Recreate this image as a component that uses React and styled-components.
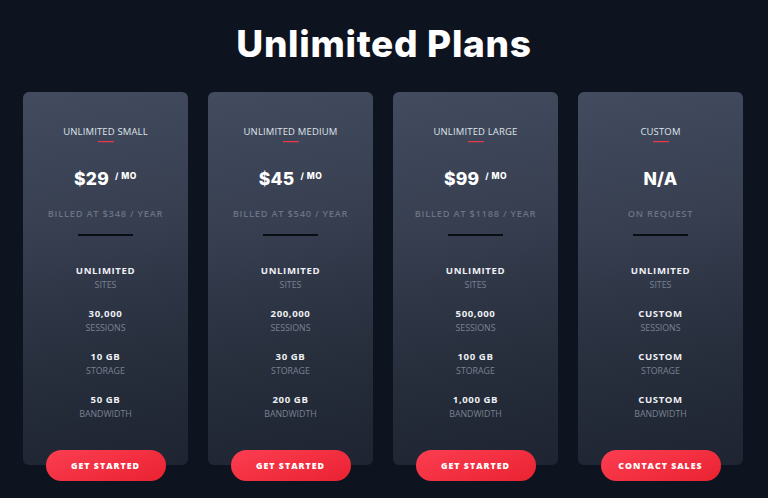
import React from "react";
import styled, { createGlobalStyle } from "styled-components";

const Global = createGlobalStyle`
  html, body { margin: 0; padding: 0; background: #0e1320; }
  body { font-family: "Open Sans", "Liberation Sans", sans-serif; -webkit-font-smoothing: antialiased; }
  * { box-sizing: border-box; }
`;

const Page = styled.div`
  width: 768px;
  height: 498px;
  background: #0e1320;
  overflow: hidden;
  display: flex;
  flex-direction: column;
  align-items: stretch;
`;

const Title = styled.h1`
  margin: 0;
  padding-top: 20px;
  height: 92px;
  text-align: center;
  font-family: "Inter", "Liberation Sans", sans-serif;
  font-weight: 800;
  font-size: 37px;
  line-height: 48px;
  letter-spacing: 0.7px;
  color: #ffffff;
`;

const Row = styled.div`
  display: flex;
  gap: 20px;
  padding-left: 23px;
`;

const Column = styled.div`
  width: 165px;
  display: flex;
  flex-direction: column;
  align-items: center;
`;

const Card = styled.div`
  width: 165px;
  height: 373px;
  border-radius: 6px;
  background: linear-gradient(170deg, #424c5e 0%, #373f51 35%, #272e3c 70%, #1e2431 100%);
  display: flex;
  flex-direction: column;
  align-items: center;
  padding-top: 34px;
`;

const PlanName = styled.div`
  font-size: 9.5px;
  line-height: 12px;
  font-weight: 400;
  color: #dfe3ea;
  letter-spacing: 0.15px;
`;

const Underline = styled.div`
  width: 16px;
  height: 1px;
  margin-top: 3px;
  background: #e8394b;
  box-shadow: 0 0.5px 0 rgba(232, 57, 75, 0.5);
`;

const PriceRow = styled.div`
  margin-top: 27px;
  display: flex;
  align-items: flex-start;
  gap: 6px;
  height: 20px;
`;

const Price = styled.span`
  font-family: "Inter", "Open Sans", sans-serif;
  font-size: 17.5px;
  line-height: 20px;
  font-weight: 800;
  color: #ffffff;
  letter-spacing: 0.2px;
`;

const Per = styled.span`
  font-family: "Inter", "Open Sans", sans-serif;
  font-size: 8.5px;
  line-height: 10px;
  font-weight: 800;
  color: #ffffff;
  margin-top: 2px;
  letter-spacing: 0.5px;
`;

const Billed = styled.div`
  margin-top: 19px;
  font-size: 9.3px;
  line-height: 12px;
  font-weight: 600;
  letter-spacing: 0.75px;
  color: #6b7384;
`;

const Divider = styled.div`
  margin-top: 14px;
  width: 55px;
  height: 1.5px;
  background: #0a0d14;
`;

const Features = styled.div`
  margin-top: 29px;
  display: flex;
  flex-direction: column;
  align-items: center;
  gap: 17px;
`;

const Feature = styled.div`
  display: flex;
  flex-direction: column;
  align-items: center;
  gap: 2px;
`;

const FeatureValue = styled.div`
  font-size: 9.6px;
  line-height: 12px;
  font-weight: 700;
  letter-spacing: 0.6px;
  color: #eef0f4;
`;

const FeatureLabel = styled.div`
  font-size: 8.8px;
  line-height: 12px;
  font-weight: 400;
  color: #7a8292;
`;

const Button = styled.button`
  margin-top: -15px;
  width: 120px;
  height: 31px;
  border: none;
  border-radius: 16px;
  background: linear-gradient(160deg, #fb3e51 0%, #ea2231 100%);
  color: #ffffff;
  font-family: "Open Sans", sans-serif;
  font-weight: 800;
  font-size: 8.8px;
  letter-spacing: 1px;
  cursor: pointer;
  padding: 0;
`;

const plans = [
  {
    name: "UNLIMITED SMALL",
    price: "$29",
    per: "/ MO",
    billed: "BILLED AT $348 / YEAR",
    features: [["UNLIMITED", "SITES"], ["30,000", "SESSIONS"], ["10 GB", "STORAGE"], ["50 GB", "BANDWIDTH"]],
    cta: "GET STARTED",
  },
  {
    name: "UNLIMITED MEDIUM",
    price: "$45",
    per: "/ MO",
    billed: "BILLED AT $540 / YEAR",
    features: [["UNLIMITED", "SITES"], ["200,000", "SESSIONS"], ["30 GB", "STORAGE"], ["200 GB", "BANDWIDTH"]],
    cta: "GET STARTED",
  },
  {
    name: "UNLIMITED LARGE",
    price: "$99",
    per: "/ MO",
    billed: "BILLED AT $1188 / YEAR",
    features: [["UNLIMITED", "SITES"], ["500,000", "SESSIONS"], ["100 GB", "STORAGE"], ["1,000 GB", "BANDWIDTH"]],
    cta: "GET STARTED",
  },
  {
    name: "CUSTOM",
    price: "N/A",
    per: null,
    billed: "ON REQUEST",
    features: [["UNLIMITED", "SITES"], ["CUSTOM", "SESSIONS"], ["CUSTOM", "STORAGE"], ["CUSTOM", "BANDWIDTH"]],
    cta: "CONTACT SALES",
  },
];

export default function App() {
  return (
    <>
      <Global />
      <Page>
        <Title>Unlimited Plans</Title>
        <Row>
          {plans.map((p) => (
            <Column key={p.name}>
              <Card>
                <PlanName>{p.name}</PlanName>
                <Underline />
                <PriceRow>
                  <Price>{p.price}</Price>
                  {p.per && <Per>{p.per}</Per>}
                </PriceRow>
                <Billed>{p.billed}</Billed>
                <Divider />
                <Features>
                  {p.features.map(([v, l]) => (
                    <Feature key={l}>
                      <FeatureValue>{v}</FeatureValue>
                      <FeatureLabel>{l}</FeatureLabel>
                    </Feature>
                  ))}
                </Features>
              </Card>
              <Button>{p.cta}</Button>
            </Column>
          ))}
        </Row>
      </Page>
    </>
  );
}
